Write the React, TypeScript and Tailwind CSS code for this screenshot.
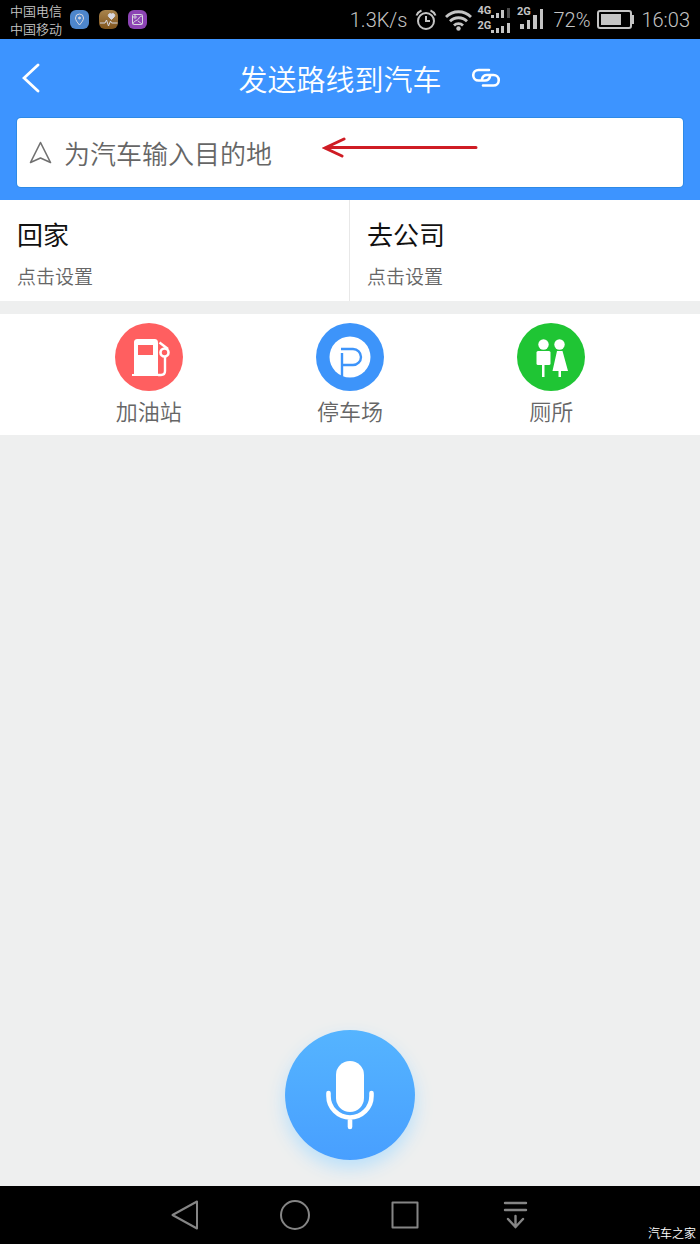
import type { ReactNode } from "react";

const places = [
  { title: "回家", hint: "点击设置" },
  { title: "去公司", hint: "点击设置" },
];

function AppBadge({ className, children }: { className: string; children: ReactNode }) {
  return (
    <span className={`flex size-[19px] items-center justify-center rounded-md ${className}`}>
      <svg width="19" height="19" viewBox="0 0 19 19" fill="none" stroke="#d8d8e0">
        {children}
      </svg>
    </span>
  );
}

function StatusBar() {
  return (
    <div className="flex h-[39px] shrink-0 items-center justify-between bg-black px-[10px] text-[#c4c4c4]">
      <div className="flex items-center gap-2">
        <div className="text-[13px] leading-[18px] font-[350] whitespace-nowrap">
          <p>中国电信</p>
          <p>中国移动</p>
        </div>
        <div className="flex gap-[10px]">
          <AppBadge className="bg-[#4d86cc]">
            <path d="M9.500 15C7 12 5.500 10 5.500 8a4 4 0 0 1 8 0c0 2-1.500 4-4 7z" />
            <circle cx="9.500" cy="8" r="1" fill="#d8d8e0" />
          </AppBadge>
          <AppBadge className="bg-linear-to-b from-[#a8844c] to-[#80541c]">
            <path d="M1 13h5l1.500-3 2 6 2-5 1 2h6" />
            <path d="M12.500 9.500L9.500 6.500a2 2 0 0 1 3-2.500a2 2 0 0 1 3 2.500z" fill="#d8d8e0" />
          </AppBadge>
          <AppBadge className="bg-[#8c44b4]">
            <rect x="4.500" y="4.500" width="10" height="10" rx="1" />
            <circle cx="7" cy="7" r="1.200" />
            <path d="M5 14c1-4 5-3 6-6 .5-1 1.500-2 3-2M10 11l4 3" />
          </AppBadge>
        </div>
      </div>

      <div className="flex items-center font-[Roboto,sans-serif] text-[20px]">
        <span className="font-light">1.3K/s</span>
        <svg className="ml-2" width="22" height="22" viewBox="0 0 22 22" fill="none" stroke="currentColor" strokeWidth="2">
          <circle cx="11" cy="12" r="8" />
          <path d="M11 7v5h4M1.500 6.500C2.500 4 4 2.500 6.500 1.500M20.500 6.500C19.500 4 18 2.500 15.500 1.500" />
        </svg>
        <svg className="ml-2" width="27" height="22" viewBox="0 0 27 22" fill="none" stroke="currentColor" strokeWidth="2.800">
          <path d="M1 8a17.500 17.500 0 0 1 25 0M5 12.300a12 12 0 0 1 17 0M9 16.500a6.500 6.500 0 0 1 9 0" />
          <circle cx="13.500" cy="19.500" r="2.200" fill="currentColor" stroke="none" />
        </svg>
        <div className="ml-[5px] flex flex-col gap-[1px] text-[11px] leading-[12px] font-bold">
          <div className="flex items-start">
            <span className="w-[14px]">4G</span>
            <svg width="20" height="14" viewBox="0 0 20 14" fill="currentColor">
              <path d="M0 10h3v3H0zM5 8h3v5H5zM10 5h3v8h-3z" />
              <path d="M16 3h3v10h-3z" fill="#4a4a4a" />
            </svg>
          </div>
          <div className="flex items-start">
            <span className="w-[14px]">2G</span>
            <svg width="20" height="14" viewBox="0 0 20 14" fill="currentColor">
              <path d="M0 10h3v3H0zM5 8h3v5H5zM10 6h3v7h-3zM16 3h3v10h-3z" />
            </svg>
          </div>
        </div>
        <svg className="ml-[6px]" width="28" height="33" viewBox="0 0 28 33" fill="currentColor">
          <text x="0" y="12" fontSize="11" fontWeight="700">2G</text>
          <path d="M3 21h4v5H3zM10 17h3v9h-3zM16 12h4v14h-4zM23 6h3v20h-3z" />
        </svg>
        <span className="ml-[8px] font-light">72%</span>
        <svg className="ml-[7px]" width="37" height="19" viewBox="0 0 37 19" fill="none" stroke="currentColor" strokeWidth="2">
          <rect x="1" y="1" width="33" height="17" rx="2" />
          <path d="M4 4h20v11H4z" fill="currentColor" stroke="none" />
          <path d="M36 5v9" />
        </svg>
        <span className="ml-[7px] font-light">16:03</span>
      </div>
    </div>
  );
}

function Category({ label, className, children }: { label: string; className: string; children: ReactNode }) {
  return (
    <button type="button" className="flex flex-col items-center text-[22px] leading-8 font-[350] text-[#666]">
      <span className={`mb-[3px] size-[68px] rounded-full ${className}`}>
        <svg width="68" height="68" viewBox="0 0 68 68" fill="none">
          {children}
        </svg>
      </span>
      {label}
    </button>
  );
}

export default function App() {
  return (
    <div className="flex min-h-screen flex-col bg-[#eeefef] font-['Noto_Sans_CJK_SC',sans-serif]">
      <StatusBar />

      {/* Header */}
      <header className="bg-[#3d94ff] px-[17px] pb-[13px]">
        <div className="flex h-[79px] items-center pb-[2px]">
          <button type="button" aria-label="返回" className="w-[22px] pl-[5px]">
            <svg width="19" height="30" viewBox="0 0 19 30" fill="none" stroke="#fff" strokeWidth="2.800" strokeLinecap="round">
              <path d="M16 2L2 15l14 13" />
            </svg>
          </button>
          <div className="flex flex-1 items-center justify-center gap-[30px] pl-[17px] text-white">
            <h1 className="text-[29px] leading-10 font-[350]">发送路线到汽车</h1>
            <button type="button" aria-label="连接">
              <svg width="29" height="20" viewBox="0 0 29 20" fill="none" stroke="currentColor" strokeWidth="2.600" strokeLinecap="round">
                <path d="M17 2H6.500a5.250 5.250 0 0 0 0 10.500H13c3 0 4.500-2 5-4" />
                <path d="M11 17.500h10.500a5.250 5.250 0 0 0 0-10.500H15c-3 0-4.500 2-5 4" />
              </svg>
            </button>
          </div>
        </div>

        {/* Destination */}
        <label className="relative flex h-[69px] items-center rounded-[4px] bg-white pl-3 ring-1 ring-[#2e8ae6]">
          <svg width="23" height="23" viewBox="0 0 23 23" fill="none" stroke="#707070" strokeWidth="1.600" strokeLinejoin="round">
            <path d="M11.500 1.500L21.500 21.500l-10-4.500-10 4.500z" />
          </svg>
          <input
            type="text"
            aria-label="目的地"
            placeholder="为汽车输入目的地"
            className="ml-3 h-full min-w-0 flex-1 text-[26px] font-[350] outline-none placeholder:text-[#666]"
          />
          <svg className="pointer-events-none absolute top-[18px] left-[305px]" width="158" height="24" viewBox="0 0 158 24" fill="none" stroke="#cf1c24" strokeWidth="3" strokeLinecap="round">
            <path d="M154 11.500H4M22 3L3 12l17 8" />
          </svg>
        </label>
      </header>

      {/* Home and work */}
      <section className="grid grid-cols-2 divide-x divide-[#e8e8e8] bg-white">
        {places.map((place) => (
          <button key={place.title} type="button" className="h-[101px] pt-1 pl-[17px] text-left">
            <p className="text-[26px] leading-9 text-[#111]">{place.title}</p>
            <p className="mt-[10px] text-[19px] leading-7 font-[350] text-[#666]">{place.hint}</p>
          </button>
        ))}
      </section>

      {/* Nearby */}
      <section className="mt-[13px] grid h-[121px] grid-cols-3 bg-white px-12 pt-[9px]">
        <Category label="加油站" className="bg-[#ff5f60]">
          <path d="M17 53v-2h2V20c0-3 1-4 4-4h16c3 0 4 1 4 4v31h2v2z" fill="#fff" />
          <path d="M23 22h15v10H23z" fill="#ff5f60" />
          <path d="M43 52h3c3 0 4-1 4-4V34" stroke="#fff" strokeWidth="2.400" />
          <circle cx="49.500" cy="29.500" r="4" stroke="#fff" strokeWidth="2.600" />
          <path d="M44.500 19.500l8.500 6.500" stroke="#fff" strokeWidth="2.400" />
        </Category>
        <Category label="停车场" className="bg-[#3d94fa]">
          <circle cx="34" cy="34" r="20.500" fill="#fff" />
          <path d="M25 26h12a8 8 0 0 1 0 16H26M26 30v24" stroke="#3d94fa" strokeWidth="2.400" />
        </Category>
        <Category label="厕所" className="bg-[#1fc534]">
          <g fill="#fff">
            <circle cx="26.500" cy="21.500" r="5.200" />
            <circle cx="42.500" cy="21.500" r="5.200" />
            <rect x="19.500" y="28" width="14" height="14" rx="1.500" />
            <path d="M25 41h2.500v13H25zM40 28h5.500l5.500 20H35.500zM41.500 47h2.500v7h-2.500z" />
          </g>
        </Category>
      </section>

      {/* Voice input */}
      <main className="flex flex-1 items-end justify-center pb-[26px]">
        <button
          type="button"
          aria-label="语音输入"
          className="size-[130px] rounded-full bg-linear-to-b from-[#55b4ff] to-[#489fff] shadow-[0_8px_18px_#b9e0fb]"
        >
          <svg width="130" height="130" viewBox="0 0 130 130" fill="none">
            <rect x="51" y="31" width="28" height="51" rx="14" fill="#fff" />
            <path d="M43.500 63v3a21.500 21.500 0 0 0 43 0v-3M65 88v9" stroke="#fff" strokeWidth="4.600" strokeLinecap="round" />
          </svg>
        </button>
      </main>

      {/* System navigation */}
      <nav className="relative flex h-[58px] shrink-0 items-center justify-center gap-20 bg-black text-[#858585]">
        <button type="button" aria-label="后退">
          <svg width="30" height="32" viewBox="0 0 30 32" fill="none" stroke="currentColor" strokeWidth="2" strokeLinejoin="round">
            <path d="M27 2.500v27L2.500 16z" />
          </svg>
        </button>
        <button type="button" aria-label="主页">
          <svg width="30" height="32" viewBox="0 0 30 32" fill="none" stroke="currentColor" strokeWidth="2">
            <circle cx="15" cy="16" r="14" />
          </svg>
        </button>
        <button type="button" aria-label="最近任务">
          <svg width="30" height="32" viewBox="0 0 30 32" fill="none" stroke="currentColor" strokeWidth="2" strokeLinejoin="round">
            <path d="M2.500 3.500h25v25h-25z" />
          </svg>
        </button>
        <button type="button" aria-label="通知">
          <svg width="30" height="32" viewBox="0 0 30 32" fill="none" stroke="currentColor" strokeWidth="2.400" strokeLinecap="round">
            <path d="M5 4h21M5 11h21M15.500 17v11M8 20l7.500 8 7.500-8" />
          </svg>
        </button>
        <span className="absolute right-1 bottom-[2px] text-[12px] leading-[18px] font-[350] text-white">汽车之家</span>
      </nav>
    </div>
  );
}
